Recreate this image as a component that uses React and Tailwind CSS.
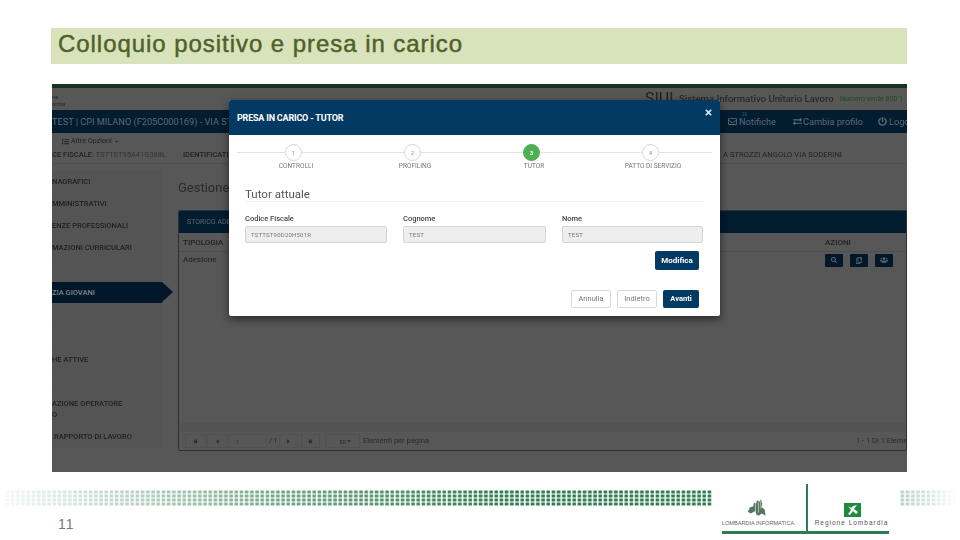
import React from "react";
import { FaTimes, FaRegEnvelope, FaExchangeAlt, FaPowerOff, FaSearch, FaRegCopy, FaUsers, FaList, FaStepBackward, FaStepForward, FaCaretLeft, FaCaretRight, FaCaretDown } from "react-icons/fa";

const roboto = "font-['Roboto','Liberation_Sans',sans-serif]";

function Dots({ id, w, stops }) {
  return (
    <svg width={w} height="16" className="block">
      <defs>
        <pattern id={id + "p"} width="5.2" height="4" patternUnits="userSpaceOnUse">
          <rect x="0.6" y="0.5" width="3.6" height="3" fill="#2e7d50" />
        </pattern>
        <linearGradient id={id + "g"}>
          {stops.map(([o, a]) => (
            <stop key={o} offset={o} stopColor="#fff" stopOpacity={a} />
          ))}
        </linearGradient>
        <mask id={id + "m"}>
          <rect width={w} height="16" fill={`url(#${id}g)`} />
        </mask>
      </defs>
      <rect width={w} height="16" fill={`url(#${id}p)`} mask={`url(#${id}m)`} />
    </svg>
  );
}

function Step({ n, label, active }) {
  return (
    <div className="w-[119px] flex flex-col items-center">
      <div className={`w-[17px] h-[17px] rounded-full flex items-center justify-center text-[6px] border ${active ? "bg-[#4caf50] border-[#4caf50] text-white font-bold" : "bg-white border-[#d5d5d5] text-[#999]"}`}>{n}</div>
      <div className="mt-[1px] ml-[5px] text-[6.5px] leading-[9px] text-[#777] whitespace-nowrap">{label}</div>
    </div>
  );
}

function Field({ label, value, className }) {
  return (
    <div className={className}>
      <div className="text-[7.5px] leading-[10px] font-medium text-[#444]">{label}</div>
      <div className="mt-[2px] h-[17px] bg-[#eeeeee] border border-[#d4d4d4] rounded-[2px] pl-[5px] flex items-center text-[6px] tracking-[0.2px] text-[#777]">{value}</div>
    </div>
  );
}

function Side({ children, h = 22, className = "" }) {
  return (
    <div style={{ height: h }} className={`flex items-center whitespace-pre-line leading-[11px] text-[7.5px] font-medium text-[#1f1f1f] border-b border-[#525252] bg-[#545454] ${className}`}>
      {children}
    </div>
  );
}

function Pg({ children, className = "" }) {
  return <div className={`h-[14px] shrink-0 flex items-center justify-center border border-[#515151] text-[#2b2b2b] text-[6px] ${className}`}>{children}</div>;
}

export default function App() {
  return (
    <div className="w-[960px] h-[540px] bg-white overflow-hidden flex flex-col font-['Liberation_Sans',sans-serif]">
      <div className="ml-[51px] mt-[28px] w-[856px] h-[36px] bg-[#d8e3bc] pl-[7px] pt-[2px] text-[24px] leading-[28px] tracking-[0.95px] text-[#4f6128] [-webkit-text-stroke:0.45px_#4f6128]">
        Colloquio positivo e presa in carico
      </div>

      <div className={`relative ml-[52px] mt-[20px] w-[855px] h-[388px] bg-[#575757] overflow-hidden flex flex-col shrink-0 ${roboto}`}>
        <div className="h-[4px] bg-[#16331f] shrink-0" />
        <div className="h-[22px] shrink-0 flex items-center blur-[0.4px]">
          <div className="pt-[2px] text-[6px] leading-[7px] text-[#2a2a2a] w-[593px] shrink-0">ne<br />ardia</div>
          <div className="text-[16px] text-[#222] leading-none w-[34px] shrink-0">SIUL</div>
          <div className="text-[9.6px] font-medium text-[#2a2a2a] whitespace-nowrap w-[161px] shrink-0">Sistema Informativo Unitario Lavoro</div>
          <div className="text-[7px] text-[#1c4d1c] whitespace-nowrap">Numero verde 800 1</div>
        </div>
        <div className="h-[23px] shrink-0 bg-[#021c30] flex items-center text-[9.2px] text-[#5f6973] whitespace-nowrap blur-[0.4px] relative">
          <span className="w-[676px] shrink-0">TEST | CPI MILANO (F205C000169) - VIA STR</span>
          <FaRegEnvelope className="w-[9px] h-[9px] shrink-0" />
          <span className="absolute left-[690px] top-[2px] text-[4.5px] text-[#2d5f8f]">26</span>
          <span className="ml-[2px] w-[54px] shrink-0">Notifiche</span>
          <FaExchangeAlt className="w-[9px] h-[9px] shrink-0" />
          <span className="w-[75px] ml-[1px] shrink-0">Cambia profilo</span>
          <FaPowerOff className="w-[9px] h-[9px] shrink-0" />
          <span className="ml-[2px] shrink-0">Logout</span>
        </div>
        <div className="h-[31px] shrink-0 border-b border-[#505050] text-[7.5px] text-[#222] whitespace-nowrap blur-[0.3px]">
          <div className="pl-[10px] pt-[2px] h-[15px] flex items-center gap-[2px] text-[7.2px]">
            <FaList className="w-[7px] h-[7px]" />Altre Opzioni<FaCaretDown className="w-[5px] h-[5px]" />
          </div>
          <div className="flex items-center h-[13px] pt-[1px]">
            <span className="w-[131px] shrink-0 font-medium">CE FISCALE: <span className="font-normal text-[#333]">TSTTST95A41G388L</span></span>
            <span className="w-[540px] shrink-0 font-medium">IDENTIFICATIVO</span>
            <span className="tracking-[0.1px]">A STROZZI ANGOLO VIA SODERINI</span>
          </div>
        </div>
        <div className="flex flex-1 min-h-0 blur-[0.4px]">
          <div className="w-[110px] shrink-0 pt-[6px] relative">
            <Side h={23}>NAGRAFICI</Side>
            <Side h={22}>MMINISTRATIVI</Side>
            <Side h={22}>ENZE PROFESSIONALI</Side>
            <Side h={22}>MAZIONI CURRICULARI</Side>
            <Side h={23}>{" "}</Side>
            <div className="h-[21px] relative bg-[#02182a] flex items-center text-[7.5px] font-medium text-[#7d858d] whitespace-nowrap">
              ZIA GIOVANI
              <div className="absolute left-full top-0 w-0 h-0 border-y-[10.5px] border-y-transparent border-l-[11px] border-l-[#02182a]" />
            </div>
            <Side h={22} />
            <Side h={24} />
            <Side h={22}>HE ATTIVE</Side>
            <Side h={21} />
            <Side h={34}>{"AZIONE OPERATORE\nO"}</Side>
            <Side h={22} className="pl-[2px]">RAPPORTO DI LAVORO</Side>
          </div>
          <div className="flex-1 min-w-0 pl-[16px]">
            <div className="h-[46px] pt-[15px] text-[13px] leading-[18px] text-[#2b2b2b]">Gestione</div>
            <div className="h-[241px] border border-[#2b3238] rounded-[2px] flex flex-col">
              <div className="h-[22px] bg-[#021c30] shrink-0 flex items-center pl-[8px] text-[7px] text-[#5f6973]">STORICO ADESIONI</div>
              <div className="h-[19px] pt-[2px] shrink-0 border-b border-[#4e4e4e] flex items-center px-[4px] text-[8px] font-medium text-[#222]">
                <span className="w-[642px] shrink-0">TIPOLOGIA</span><span>AZIONI</span>
              </div>
              <div className="h-[16px] shrink-0 flex items-center px-[4px] text-[8px] font-medium text-[#2a2a2a]">
                <span className="w-[642px] shrink-0">Adesione</span>
                <div className="flex gap-[7px] text-[#5f6973]">
                  <div className="w-[18px] h-[13px] bg-[#02182a] rounded-[1px] flex items-center justify-center"><FaSearch className="w-[6px] h-[6px]" /></div>
                  <div className="w-[18px] h-[13px] bg-[#02182a] rounded-[1px] flex items-center justify-center"><FaRegCopy className="w-[6px] h-[7px]" /></div>
                  <div className="w-[18px] h-[13px] bg-[#02182a] rounded-[1px] flex items-center justify-center"><FaUsers className="w-[8px] h-[8px]" /></div>
                </div>
              </div>
              <div className="flex-1" />
              <div className="h-[8px] shrink-0 bg-[#535353]" />
              <div className="h-[19px] shrink-0 flex items-center pl-[6px] border-t border-[#515151] text-[#2b2b2b]">
                <Pg className="w-[21px]"><FaStepBackward className="w-[5px] h-[5px]" /></Pg>
                <Pg className="w-[21px] ml-[1px]"><FaCaretLeft className="w-[7px] h-[7px]" /></Pg>
                <Pg className="w-[38px] ml-[1px] justify-start pl-[6px]">1</Pg>
                <span className="text-[7px] w-[12px] shrink-0 pl-[2px]">/ 1</span>
                <Pg className="w-[19px]"><FaCaretRight className="w-[7px] h-[7px]" /></Pg>
                <Pg className="w-[19px] ml-[3px]"><FaStepForward className="w-[5px] h-[5px]" /></Pg>
                <Pg className="w-[35px] ml-[5px] justify-between pl-[8px] pr-[2px]">50<FaCaretDown className="w-[6px] h-[6px]" /></Pg>
                <span className="ml-[3px] text-[7.5px] w-[493px] shrink-0">Elementi per pagina</span>
                <span className="text-[7.5px] whitespace-nowrap shrink-0">1 - 1 Di 1 Elementi</span>
              </div>
            </div>
          </div>
        </div>

        <div className="absolute left-[177px] top-[16px] w-[491px] h-[216px] bg-white rounded-[2px] shadow-[0_3px_8px_rgba(0,0,0,0.55)] flex flex-col blur-[0.3px]">
          <div className="h-[35px] shrink-0 bg-[#023a63] rounded-t-[2px] flex items-center justify-between pl-[8px] pr-[7px] pt-[3px] text-white">
            <span className="text-[9px] font-bold tracking-[-0.2px]">PRESA IN CARICO - TUTOR</span>
            <FaTimes className="w-[9px] h-[9px] -mt-[14px] text-[#d8e0e8]" />
          </div>
          <div className="relative h-[41px] shrink-0 pt-[9px] pl-[5px] flex">
            <div className="absolute left-[8px] right-[8px] top-[17px] h-px bg-[#e2e2e2]" />
            <div className="relative flex">
              <Step n="1" label="CONTROLLI" />
              <Step n="2" label="PROFILING" />
              <Step n="3" label="TUTOR" active />
              <Step n="4" label="PATTO DI SERVIZIO" />
            </div>
          </div>
          <div className="mx-[16px] h-[26px] shrink-0 border-b border-[#eeeeee] pt-[11px] text-[11.5px] leading-[15px] text-[#555]">Tutor attuale</div>
          <div className="flex mx-[16px] mt-[12px] shrink-0">
            <Field label="Codice Fiscale" value="TSTTST90D20H501R" className="w-[142px] mr-[16px]" />
            <Field label="Cognome" value="TEST" className="w-[143px] mr-[16px]" />
            <Field label="Nome" value="TEST" className="w-[141px]" />
          </div>
          <div className="flex justify-end mr-[21px] mt-[8px] shrink-0">
            <div className="w-[44px] h-[19px] bg-[#023a63] rounded-[2px] text-white text-[8px] font-bold flex items-center justify-center">Modifica</div>
          </div>
          <div className="flex justify-end mr-[21px] mt-[20px] gap-[6px] text-[7.5px] shrink-0">
            <div className="w-[40px] h-[18px] bg-white border border-[#d9d9d9] rounded-[2px] text-[#777] flex items-center justify-center">Annulla</div>
            <div className="w-[40px] h-[18px] bg-white border border-[#d9d9d9] rounded-[2px] text-[#777] flex items-center justify-center">Indietro</div>
            <div className="w-[36px] h-[18px] bg-[#023a63] rounded-[2px] text-white font-bold flex items-center justify-center">Avanti</div>
          </div>
        </div>
      </div>

      <div className="flex-1 flex pl-[5px]">
        <div className="w-[707px] pt-[18px] shrink-0">
          <Dots id="a" w={707} stops={[[0, 0.05], [0.4, 0.7], [0.7, 1], [1, 1]]} />
          <div className="pl-[53px] pt-[10px] text-[14px] leading-[16px] tracking-[1px] text-[#777]">11</div>
        </div>
        <div className="ml-[10px] mt-[12px] w-[167px] h-[50px] shrink-0 flex border-b-[3px] border-[#2e7d50]">
          <div className="w-[86px] shrink-0 border-r-2 border-[#2e7d50] flex flex-col items-center">
            <svg width="26" height="20" viewBox="0 0 26 26" className="mt-[14px] ml-[-14px]">
              <path d="M1 18 L4 12 L8 11 L9 6 L12 7 L13 3 L16 5 L18 2 L20 7 L19 12 L23 15 L24 23 L19 20 L15 23 L12 21 L11 17 L5 20 Z" fill="#55775f" />
              <path d="M11 5v14M15 5v14M18 4v10" stroke="#e9efe9" strokeWidth="0.8" />
            </svg>
            <div className="mt-[1px] -ml-[12px] text-[5.6px] leading-[8px] text-[#666] whitespace-nowrap">LOMBARDIA INFORMATICA</div>
          </div>
          <div className="flex-1 flex flex-col items-center">
            <svg width="17" height="14" viewBox="0 0 17 14" className="mt-[19px] ml-[7px]">
              <rect width="17" height="14" fill="#1d8a3c" />
              <path d="M4 3 L7 5 L9 3 L13 2 L10 6 L14 9 L12 11 L9 8 L6 12 L4 11 L7 7 Z" fill="#fff" />
            </svg>
            <div className="mt-[2px] ml-[6px] text-[6.5px] leading-[8px] tracking-[1px] text-[#555] whitespace-nowrap">Regione Lombardia</div>
          </div>
        </div>
        <div className="ml-[11px] pt-[18px] shrink-0">
          <Dots id="b" w={55} stops={[[0, 0.35], [0.5, 0.2], [1, 0.02]]} />
        </div>
      </div>
    </div>
  );
}
